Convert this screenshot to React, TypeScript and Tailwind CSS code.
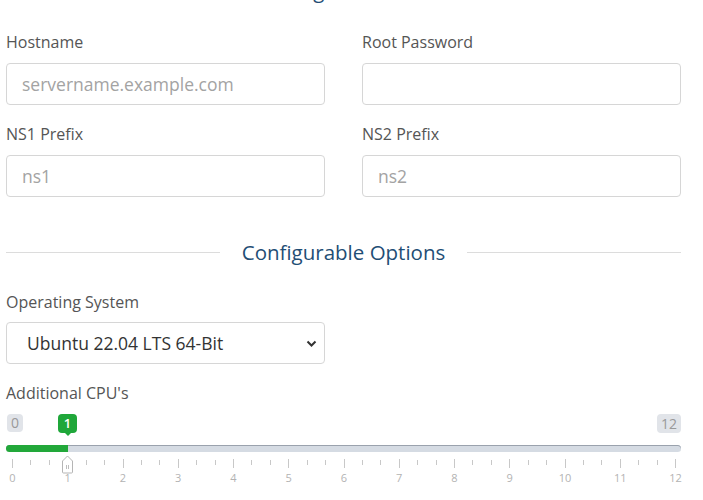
import React from "react";

const ticks = Array.from({ length: 37 }, (_, i) => i);

function SectionHeading({ title, className }: { title: string; className?: string }) {
  return (
    <div className={"flex items-center h-[28px] " + (className ?? "")}>
      <div className="flex-1 h-px bg-[#dcdcdc]" />
      <span className="px-[22px] text-[20.5px] leading-[28px] text-[#1f4e75] whitespace-nowrap">
        {title}
      </span>
      <div className="flex-1 h-px bg-[#dcdcdc]" />
    </div>
  );
}

function Field({ label, placeholder }: { label: string; placeholder?: string }) {
  return (
    <div>
      <label className="block text-[16px] leading-[20px] text-[#555] mb-[11px]">{label}</label>
      <input
        className="block w-full h-[42px] px-[15px] border border-[#d6d6d6] rounded-[4px] text-[17.5px] text-[#333] placeholder:text-[#a3a3a3] outline-none"
        placeholder={placeholder}
      />
    </div>
  );
}

function CpuSlider() {
  const unit = 663 / 12;
  return (
    <div className="relative h-[90px] mt-[8px]">
      {/* min / current / max */}
      <span className="absolute left-[1px] top-[3px] px-[4px] h-[18px] leading-[18px] rounded-[4px] bg-[#e1e4e9] text-[#999] text-[14px]">
        0
      </span>
      <span className="absolute right-0 top-[3px] px-[4px] h-[19px] leading-[19px] rounded-[4px] bg-[#e1e4e9] text-[#999] text-[14px]">
        12
      </span>
      <div className="absolute left-[52px] top-[3px] w-[19px] flex flex-col items-center">
        <span className="w-[19px] h-[19px] leading-[19px] rounded-[4px] bg-[#1fa73a] text-white text-[13px] text-center font-semibold">
          1
        </span>
        <span className="w-0 h-0 border-l-[3px] border-r-[3px] border-t-[3px] border-l-transparent border-r-transparent border-t-[#1fa73a]" />
      </div>

      {/* track */}
      <div className="absolute left-0 right-0 top-[34px] h-[7px] rounded-full bg-[#d5dbe3] shadow-[inset_0_1px_0_#9aa2ad]" />
      <div className="absolute left-0 w-[62px] top-[34px] h-[7px] rounded-l-full bg-[#22a83a]" />

      {/* grid */}
      {ticks.map((i) => {
        const major = i % 3 === 0;
        return (
          <div
            key={i}
            className={"absolute w-px bg-[#c8c8c8] " + (major ? "top-[48px] h-[9px]" : "top-[49px] h-[5px]")}
            style={{ left: 6 + (i * unit) / 3 }}
          />
        );
      })}
      {Array.from({ length: 13 }, (_, n) => (
        <span
          key={n}
          className="absolute top-[60px] w-[20px] -ml-[10px] text-center text-[11px] leading-[14px] text-[#b3b3b3]"
          style={{ left: 6.5 + n * unit }}
        >
          {n}
        </span>
      ))}

      {/* handle */}
      <svg className="absolute left-[55px] top-[44px]" width="13" height="19" viewBox="0 0 13 19">
        <path d="M1.5 6 L6.5 1 L11.5 6 V17 Q11.5 18 10.5 18 H2.5 Q1.5 18 1.5 17 Z" fill="#fff" stroke="#b5b5b5" />
        <line x1="5.5" y1="10" x2="5.5" y2="14" stroke="#bdbdbd" />
        <line x1="7.5" y1="10" x2="7.5" y2="14" stroke="#bdbdbd" />
      </svg>
    </div>
  );
}

export default function App() {
  return (
    <div className="w-[703px] h-[500px] overflow-hidden bg-white font-['Open_Sans',sans-serif]">
      <div className="w-[675px] ml-[6px]">
        <SectionHeading title="Configure Server" className="-mt-[24px]" />

        <div className="grid grid-cols-2 gap-x-[37px] gap-y-[19px] mt-[28px]">
          <Field label="Hostname" placeholder="servername.example.com" />
          <Field label="Root Password" />
          <Field label="NS1 Prefix" placeholder="ns1" />
          <Field label="NS2 Prefix" placeholder="ns2" />
        </div>

        <SectionHeading title="Configurable Options" className="mt-[41px]" />

        <div className="mt-[26px] w-[319px]">
          <label className="block text-[16px] leading-[20px] text-[#555] mb-[10px]">Operating System</label>
          <div className="relative h-[42px] border border-[#d6d6d6] rounded-[4px] flex items-center pl-[20px]">
            <span className="text-[17.5px] text-[#333]">Ubuntu 22.04 LTS 64-Bit</span>
            <svg className="absolute right-[7px] top-[17px]" width="11" height="7" viewBox="0 0 11 7">
              <polyline points="1.5,1.5 5.5,5.5 9.5,1.5" fill="none" stroke="#333" strokeWidth="2" />
            </svg>
          </div>
        </div>

        <div className="mt-[19px]">
          <label className="block text-[16px] leading-[20px] text-[#555]">Additional CPU's</label>
          <CpuSlider />
        </div>
      </div>
    </div>
  );
}
